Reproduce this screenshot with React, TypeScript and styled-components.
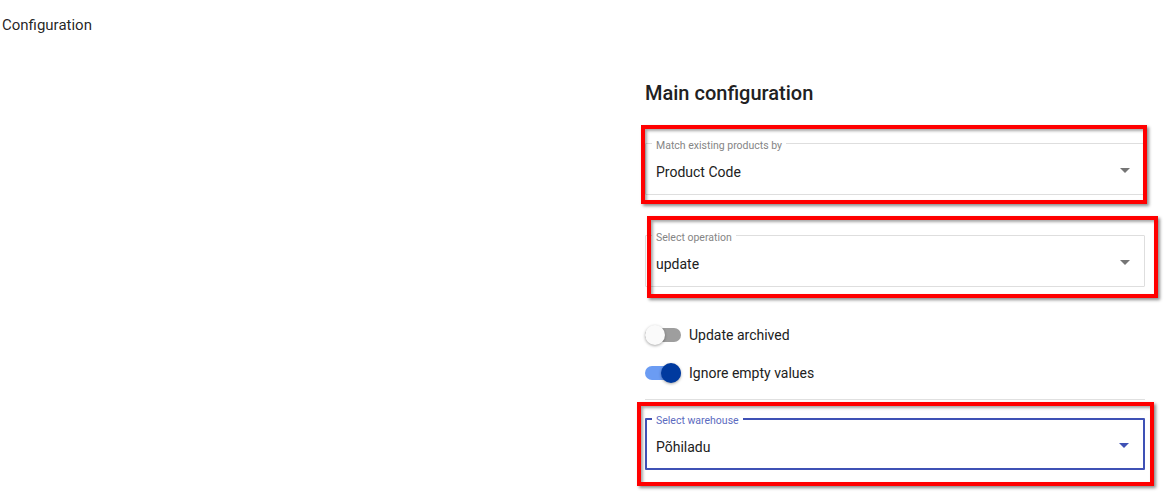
import { ReactNode } from 'react'
import styled, { createGlobalStyle } from 'styled-components'

const GlobalStyle = createGlobalStyle`
	body {
		margin: 0;
		background: #fff;
		font-family: Roboto, 'Liberation Sans', Arial, sans-serif;
		color: rgba(0, 0, 0, 0.87);
	}
`

type Offsets = { top: number; left: number; right: number; bottom: number }

type SelectProps = {
	label: string
	value: string
	focused?: boolean
	mark: Offsets
}

const SelectField = ({ label, value, focused, mark }: SelectProps) => (
	<FieldWrap>
		<Outline $focused={focused}>
			<Label $focused={focused}>{label}</Label>
			<Value>{value}</Value>
			<Arrow $focused={focused} />
		</Outline>
		<Highlight $o={mark} />
	</FieldWrap>
)

const Toggle = ({ checked, children }: { checked?: boolean; children: ReactNode }) => (
	<SwitchRow>
		<Track $checked={checked}>
			<Thumb $checked={checked} />
		</Track>
		<span>{children}</span>
	</SwitchRow>
)

const App = () => (
	<Page>
		<GlobalStyle />
		<TopTitle>Configuration</TopTitle>
		<Columns>
			<div />
			<Panel>
				<Heading>Main configuration</Heading>
				<Gap $h={36} />
				<SelectField
					label='Match existing products by'
					value='Product Code'
					mark={{ top: -18, left: -4, right: -2, bottom: -9 }}
				/>
				<Gap $h={40} />
				<SelectField
					label='Select operation'
					value='update'
					mark={{ top: -19, left: 2, right: -13, bottom: -11 }}
				/>
				<Gap $h={29} />
				<Toggle>Update archived</Toggle>
				<Toggle checked>Ignore empty values</Toggle>
				<Divider />
				<SelectField
					label='Select warehouse'
					value='Põhiladu'
					focused
					mark={{ top: -16, left: -8, right: -9, bottom: -16 }}
				/>
			</Panel>
		</Columns>
	</Page>
)

const Page = styled.div`
	width: 1167px;
	min-height: 499px;
`

const TopTitle = styled.div`
	padding: 15px 2px 13px;
	font-size: 15px;
	line-height: 20px;
`

const Columns = styled.div`
	display: grid;
	grid-template-columns: 645px 500px;
`

const Panel = styled.div`
	display: flex;
	flex-direction: column;
	padding-top: 31px;
`

const Heading = styled.h2`
	margin: 0;
	font-size: 20px;
	line-height: 28px;
	font-weight: 500;
	color: #212121;
`

const Gap = styled.div<{ $h: number }>`
	height: ${p => p.$h}px;
`

const FieldWrap = styled.div`
	position: relative;
`

const Outline = styled.div<{ $focused?: boolean }>`
	position: relative;
	box-sizing: border-box;
	height: 52px;
	display: flex;
	align-items: center;
	padding: 5px 14px 0 10px;
	border: ${p => (p.$focused ? '2px solid #3f51b5' : '1px solid #dedede')};
	padding-left: ${p => (p.$focused ? 9 : 10)}px;
	border-radius: 1px;
`

const Label = styled.span<{ $focused?: boolean }>`
	position: absolute;
	top: ${p => (p.$focused ? -6 : -5)}px;
	left: ${p => (p.$focused ? 5 : 6)}px;
	padding: 0 4px;
	background: #fff;
	font-size: 10.5px;
	line-height: 14px;
	color: ${p => (p.$focused ? '#5c6bc0' : '#858585')};
`

const Value = styled.span`
	flex: 1;
	font-size: 14px;
	line-height: 20px;
	color: #212121;
`

const Arrow = styled.span<{ $focused?: boolean }>`
	width: 0;
	height: 0;
	border-left: 5px solid transparent;
	border-right: 5px solid transparent;
	border-top: 5px solid ${p => (p.$focused ? '#3f51b5' : '#757575')};
	margin-top: -3px;
`

const Highlight = styled.div<{ $o: Offsets }>`
	position: absolute;
	top: ${p => p.$o.top}px;
	left: ${p => p.$o.left}px;
	right: ${p => p.$o.right}px;
	bottom: ${p => p.$o.bottom}px;
	border: 4px solid #ff0000;
	box-shadow: 2px 2px 3px rgba(0, 0, 0, 0.45), inset 2px 2px 3px rgba(0, 0, 0, 0.35);
	pointer-events: none;
`

const SwitchRow = styled.div`
	height: 38px;
	display: flex;
	align-items: center;
	gap: 8px;
	font-size: 14px;
	color: #212121;
`

const Track = styled.div<{ $checked?: boolean }>`
	position: relative;
	width: 36px;
	height: 14px;
	border-radius: 7px;
	background: ${p => (p.$checked ? '#6b9cf3' : '#9e9e9e')};
`

const Thumb = styled.div<{ $checked?: boolean }>`
	position: absolute;
	top: -3px;
	left: ${p => (p.$checked ? 16 : 0)}px;
	width: 20px;
	height: 20px;
	border-radius: 50%;
	background: ${p => (p.$checked ? '#003a9f' : '#fafafa')};
	box-shadow: 0 1px 3px rgba(0, 0, 0, 0.35);
`

const Divider = styled.div`
	height: 1px;
	margin: 7px 0 18px;
	background: #e0e0e0;
`

export default App
